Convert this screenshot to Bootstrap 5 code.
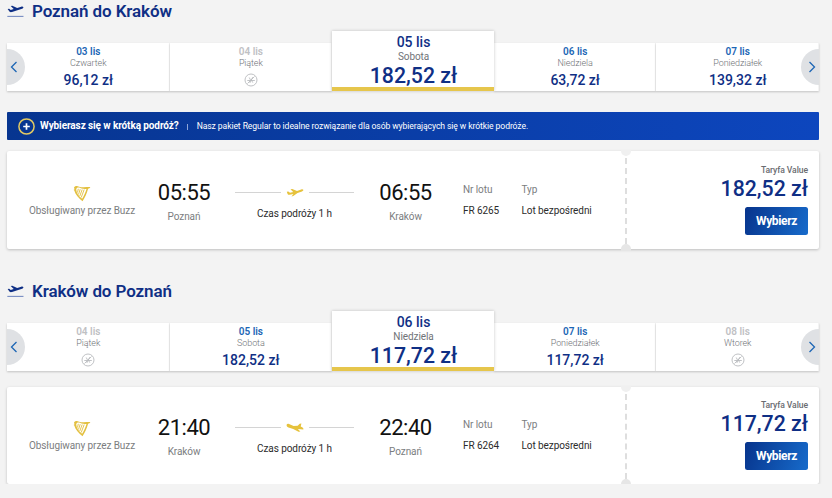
<!DOCTYPE html>
<html lang="pl">
<head>
  <meta charset="UTF-8" />
  <meta name="viewport" content="width=device-width, initial-scale=1" />
  <title>Poznań - Kraków</title>
  <link href="https://cdn.jsdelivr.net/npm/bootstrap@5.3.0/dist/css/bootstrap.min.css" rel="stylesheet" />
  <style>
    body {
      background-color: #f3f3f3;
      color: #2b2b2b;
      font-family: Roboto, "Liberation Sans", sans-serif;
      font-size: 10px;
      letter-spacing: -.08px;
      line-height: 12px;
      overflow: hidden;
    }
    .page {
      width: 812px;
      margin-left: 7px;
    }
    .route-title {
      height: 22px;
      margin-bottom: 9px;
      color: #0f2f85;
    }
    .route-title h2 {
      font-size: 17px;
      font-weight: 600;
      letter-spacing: -.1px;
      line-height: 22px;
      margin: 0 0 0 8px;
    }

    /* Date carousel */
    .dates {
      height: 60px;
    }
    .day {
      height: 48px;
      padding: 3px 0 0 1px;
      background-color: #fff;
      box-shadow: 0 1px 2px rgba(0, 0, 0, .2);
      border-right: 1px solid #f3f3f3;
    }
    .day-date {
      color: #1c66b5;
      font-weight: 600;
      letter-spacing: 0;
      line-height: 12px;
    }
    .day-name {
      color: #707377;
      font-size: 9px;
      font-weight: 300;
      line-height: 10px;
    }
    .day-price {
      color: #0f2f85;
      font-size: 14px;
      font-weight: 500;
      letter-spacing: 0;
      line-height: 16px;
      margin-top: 4px;
    }
    .day-off .day-date {
      color: #bfc1c4;
    }
    .day-off svg {
      display: block;
      margin: 5px auto 0;
    }
    .day-active {
      height: 60px;
      padding-top: 3px;
      border-right: 0;
      border-bottom: 4px solid #e6c64c;
      box-shadow: 0 0 3px rgba(0, 0, 0, .22);
      z-index: 1;
    }
    .day-active .day-date {
      color: #0f2f85;
      font-size: 14px;
      font-weight: 500;
      line-height: 17px;
    }
    .day-active .day-name {
      font-size: 10px;
      font-weight: 400;
      line-height: 11px;
    }
    .day-active .day-price {
      font-size: 21.3px;
      line-height: 24px;
      margin-top: 2px;
    }
    .arrow {
      position: absolute;
      top: 18px;
      width: 18px;
      height: 36px;
      padding: 0;
      border: 0;
      background-color: #dfe1e4;
      z-index: 2;
    }
    .arrow svg {
      display: block;
    }
    .arrow-prev {
      left: 0;
      padding-left: 3px;
      border-radius: 0 18px 18px 0;
    }
    .arrow-next {
      right: 0;
      padding-left: 7px;
      border-radius: 18px 0 0 18px;
    }

    /* Promo bar */
    .promo {
      height: 28px;
      margin: 21px 0 11px;
      padding-left: 11px;
      border-radius: 1px;
      background: linear-gradient(90deg, #073590, #0d46be);
      color: #fff;
    }
    .promo strong {
      margin-left: 5px;
      letter-spacing: -.1px;
    }
    .promo .sep {
      width: 1px;
      height: 6px;
      margin: 1px 9px 0 8px;
      background-color: #8fa6d8;
    }
    .promo .info {
      font-size: 8.6px;
      letter-spacing: -.09px;
    }

    /* Flight card */
    .flight {
      height: 98px;
      background-color: #fff;
      border-radius: 2px;
      box-shadow: 0 1px 3px rgba(0, 0, 0, .22);
    }
    .flight-low {
      height: 97px;
      margin-top: 16px;
    }
    .operator {
      width: 150px;
      padding-top: 34px;
      color: #7b7d80;
    }
    .operator svg {
      display: block;
      margin: 0 auto 3px;
    }
    .stop {
      width: 54px;
      padding-top: 29px;
      color: #7b7d80;
    }
    .stop-time {
      color: #111;
      font-size: 22px;
      font-weight: 400;
      letter-spacing: -.5px;
      line-height: 25px;
      margin-bottom: 6px;
      white-space: nowrap;
    }
    .trip {
      width: 119px;
      margin: 0 24.5px 0 24px;
      padding-top: 34px;
    }
    .trip-line {
      height: 14px;
      margin-bottom: 9px;
    }
    .trip-line span {
      height: 1px;
      width: 45.5px;
      background-color: #d4d4d4;
    }
    .detail {
      padding-top: 33px;
    }
    .detail-no {
      width: 58.5px;
      margin-left: 30.5px;
    }
    .detail dt {
      color: #7b7d80;
      font-weight: 400;
      line-height: 12px;
      margin-bottom: 9px;
    }
    .detail dd {
      margin: 0;
      line-height: 12px;
    }
    .main-part {
      width: 618px;
    }
    .tear {
      width: 0;
      margin: 7px 0 5px;
      border-left: 2px dashed #dedede;
    }
    .notch {
      position: absolute;
      left: 614px;
      width: 10px;
      background-color: #f0f0f0;
    }
    .notch-top {
      top: -1px;
      height: 6px;
      border-radius: 0 0 5px 5px;
    }
    .notch-bottom {
      bottom: -2px;
      height: 7px;
      background-color: #e6e6e6;
      border-radius: 5px 5px 0 0;
    }
    .fare {
      padding: 14px 11px 0 0;
    }
    .fare-name {
      color: #6a6c70;
      font-size: 8.6px;
      font-weight: 500;
      line-height: 11px;
    }
    .fare-price {
      color: #0f2f85;
      font-size: 21.3px;
      font-weight: 500;
      letter-spacing: 0;
      line-height: 26px;
    }
    .btn-select,
    .btn-select:hover {
      width: 63px;
      height: 28px;
      margin-top: 5px;
      padding: 0;
      border: 0;
      border-radius: 2.5px;
      background: linear-gradient(110deg, #07348c, #176bcb);
      color: #fff;
      font-size: 12px;
      font-weight: 700;
      letter-spacing: -.35px;
      line-height: 27px;
    }

    /* The return card sits one pixel tighter than the first */
    .flight-low .operator,
    .flight-low .trip {
      padding-top: 33px;
    }
    .flight-low .stop {
      padding-top: 28px;
    }
    .flight-low .detail {
      padding-top: 32px;
    }
    .flight-low .fare {
      padding-top: 13px;
    }
    .second {
      margin-top: 31px;
    }
  </style>
</head>
<body>
  <!-- Shared icons -->
  <svg class="d-none">
    <symbol id="takeoff" viewBox="0 0 16 12">
      <path d="M.6 3.6l1.400-.3 1.500 1.200 2.800-.9L3.500.9 5 .5l4.600 2.200 3.800-1.200c1-.3 1.800 0 2 .5.2.6-.4 1.100-1.200 1.400L4.700 6.500c-1.100.3-2 .1-2.600-.7z" fill="#0f2f85" />
      <path d="M.3 10.600h15.200" stroke="#7389c0" stroke-width="1" />
    </symbol>
    <symbol id="no-flight" viewBox="0 0 14 14">
      <g fill="none" stroke="#b9bbbe" stroke-width=".9">
        <circle cx="7" cy="7" r="6" />
        <path d="M3.500 10.500l7-7M3.300 7.500h7.500M5.200 4.500l1.600 3-1 2.500M8.700 4.200L7.300 7l1.500 2.600" />
      </g>
    </symbol>
    <symbol id="harp" viewBox="0 0 18 17">
      <path d="M1 2.500C2.500.5 4.500.8 6 1.700c3 1 7.500.3 11.300.4-.2 1.200-1.300 1.600-2.200 1.700-1.200 4.500-3 8.700-5.600 12.400C5.500 13 2 9.300 1.300 5.500L.6 5l.9-.8zM3.200 4.200c.2 3.800 2.600 7.200 5.900 9.500 1.900-3 3.400-6.300 4.400-9.700-3.600.3-5.500-.3-7.300-1.400-1.200-.5-2.500-.2-3 1.600z" fill="#e3c040" fill-rule="evenodd" />
      <path d="M5.300 3.800L4.500 7.500M7.200 4.200L5.500 9.500M9.200 4.500L6.800 11M11.200 4.500L8.200 12.500" stroke="#e3c040" stroke-width=".9" />
    </symbol>
    <symbol id="plane-up" viewBox="0 0 18 10">
      <path d="M.8 4.800l1.500-.2 1.700 1.200 3.200-.8L4.500 2.300l1.800-.4 4.700 2 4.200-1.500c1.100-.4 2-.1 2.100.4.200.7-.4 1.200-1.300 1.600l-4.500 1.700-4.200 3-1.800.3L7.400 7l-3.800.8c-1 .1-1.700-.2-2-.9z" fill="#e6c23c" />
    </symbol>
    <symbol id="plane-down" viewBox="0 0 18 10">
      <path d="M.7 2.600c.4-.8 1.300-.9 2.300-.5l4.600 1.800 4.100-.2 2-2 1.700-.1-.7 3 1.900.9 1 1.500-.5.6-5.300-.5 2.600 2.400-1.900.3-5.300-2.700-4.700-1.500C1 5 .3 3.800.7 2.600z" fill="#e6c23c" />
    </symbol>
    <symbol id="chev-left" viewBox="0 0 8 12">
      <path d="M6.500 1L1.500 6l5 5" fill="none" stroke="#1c66b5" stroke-width="1.300" />
    </symbol>
    <symbol id="chev-right" viewBox="0 0 8 12">
      <path d="M1.500 1l5 5-5 5" fill="none" stroke="#1c66b5" stroke-width="1.300" />
    </symbol>
  </svg>

  <main class="page">
    <!-- Outbound -->
    <section>
      <div class="route-title d-flex align-items-center">
        <svg width="17" height="13"><use href="#takeoff" /></svg>
        <h2>Poznań do Kraków</h2>
      </div>
      <div class="dates position-relative d-flex align-items-end text-center">
        <button class="arrow arrow-prev" aria-label="Wstecz"><svg width="8" height="12"><use href="#chev-left" /></svg></button>
        <div class="day flex-fill w-100">
          <div class="day-date">03 lis</div>
          <div class="day-name">Czwartek</div>
          <div class="day-price">96,12 zł</div>
        </div>
        <div class="day day-off flex-fill w-100">
          <div class="day-date">04 lis</div>
          <div class="day-name">Piątek</div>
          <svg width="14" height="14"><use href="#no-flight" /></svg>
        </div>
        <div class="day day-active flex-fill w-100">
          <div class="day-date">05 lis</div>
          <div class="day-name">Sobota</div>
          <div class="day-price">182,52 zł</div>
        </div>
        <div class="day flex-fill w-100">
          <div class="day-date">06 lis</div>
          <div class="day-name">Niedziela</div>
          <div class="day-price">63,72 zł</div>
        </div>
        <div class="day flex-fill w-100">
          <div class="day-date">07 lis</div>
          <div class="day-name">Poniedziałek</div>
          <div class="day-price">139,32 zł</div>
        </div>
        <button class="arrow arrow-next" aria-label="Dalej"><svg width="8" height="12"><use href="#chev-right" /></svg></button>
      </div>

      <div class="promo d-flex align-items-center">
        <svg width="17" height="17" viewBox="0 0 17 17">
          <circle cx="8.500" cy="8.500" r="7.600" fill="none" stroke="#e3ca63" stroke-width="1.500" />
          <path d="M8.500 5.200v6.600M5.200 8.500h6.600" stroke="#fff" stroke-width="1.700" />
        </svg>
        <strong>Wybierasz się w krótką podróż?</strong>
        <span class="sep"></span>
        <span class="info">Nasz pakiet Regular to idealne rozwiązanie dla osób wybierających się w krótkie podróże.</span>
      </div>

      <div class="flight position-relative d-flex">
        <div class="main-part d-flex">
          <div class="operator text-center">
            <svg width="18" height="17"><use href="#harp" /></svg>
            Obsługiwany przez Buzz
          </div>
          <div class="stop text-center">
            <div class="stop-time">05:55</div>
            Poznań
          </div>
          <div class="trip text-center">
            <div class="trip-line d-flex justify-content-between align-items-center">
              <span></span>
              <svg width="18" height="10"><use href="#plane-up" /></svg>
              <span></span>
            </div>
            Czas podróży 1 h
          </div>
          <div class="stop text-center">
            <div class="stop-time">06:55</div>
            Kraków
          </div>
          <dl class="detail detail-no mb-0">
            <dt>Nr lotu</dt>
            <dd>FR 6265</dd>
          </dl>
          <dl class="detail mb-0">
            <dt>Typ</dt>
            <dd>Lot bezpośredni</dd>
          </dl>
        </div>
        <div class="tear"></div>
        <span class="notch notch-top"></span>
        <span class="notch notch-bottom"></span>
        <div class="fare flex-grow-1 text-end">
          <div class="fare-name">Taryfa Value</div>
          <div class="fare-price">182,52 zł</div>
          <button class="btn btn-select">Wybierz</button>
        </div>
      </div>
    </section>

    <!-- Return -->
    <section class="second">
      <div class="route-title d-flex align-items-center">
        <svg width="17" height="13"><use href="#takeoff" /></svg>
        <h2>Kraków do Poznań</h2>
      </div>
      <div class="dates position-relative d-flex align-items-end text-center">
        <button class="arrow arrow-prev" aria-label="Wstecz"><svg width="8" height="12"><use href="#chev-left" /></svg></button>
        <div class="day day-off flex-fill w-100">
          <div class="day-date">04 lis</div>
          <div class="day-name">Piątek</div>
          <svg width="14" height="14"><use href="#no-flight" /></svg>
        </div>
        <div class="day flex-fill w-100">
          <div class="day-date">05 lis</div>
          <div class="day-name">Sobota</div>
          <div class="day-price">182,52 zł</div>
        </div>
        <div class="day day-active flex-fill w-100">
          <div class="day-date">06 lis</div>
          <div class="day-name">Niedziela</div>
          <div class="day-price">117,72 zł</div>
        </div>
        <div class="day flex-fill w-100">
          <div class="day-date">07 lis</div>
          <div class="day-name">Poniedziałek</div>
          <div class="day-price">117,72 zł</div>
        </div>
        <div class="day day-off flex-fill w-100">
          <div class="day-date">08 lis</div>
          <div class="day-name">Wtorek</div>
          <svg width="14" height="14"><use href="#no-flight" /></svg>
        </div>
        <button class="arrow arrow-next" aria-label="Dalej"><svg width="8" height="12"><use href="#chev-right" /></svg></button>
      </div>

      <div class="flight flight-low position-relative d-flex">
        <div class="main-part d-flex">
          <div class="operator text-center">
            <svg width="18" height="17"><use href="#harp" /></svg>
            Obsługiwany przez Buzz
          </div>
          <div class="stop text-center">
            <div class="stop-time">21:40</div>
            Kraków
          </div>
          <div class="trip text-center">
            <div class="trip-line d-flex justify-content-between align-items-center">
              <span></span>
              <svg width="18" height="10"><use href="#plane-down" /></svg>
              <span></span>
            </div>
            Czas podróży 1 h
          </div>
          <div class="stop text-center">
            <div class="stop-time">22:40</div>
            Poznań
          </div>
          <dl class="detail detail-no mb-0">
            <dt>Nr lotu</dt>
            <dd>FR 6264</dd>
          </dl>
          <dl class="detail mb-0">
            <dt>Typ</dt>
            <dd>Lot bezpośredni</dd>
          </dl>
        </div>
        <div class="tear"></div>
        <span class="notch notch-top"></span>
        <span class="notch notch-bottom"></span>
        <div class="fare flex-grow-1 text-end">
          <div class="fare-name">Taryfa Value</div>
          <div class="fare-price">117,72 zł</div>
          <button class="btn btn-select">Wybierz</button>
        </div>
      </div>
    </section>
  </main>

  <script src="https://cdn.jsdelivr.net/npm/bootstrap@5.3.0/dist/js/bootstrap.bundle.min.js"></script>
</body>
</html>
